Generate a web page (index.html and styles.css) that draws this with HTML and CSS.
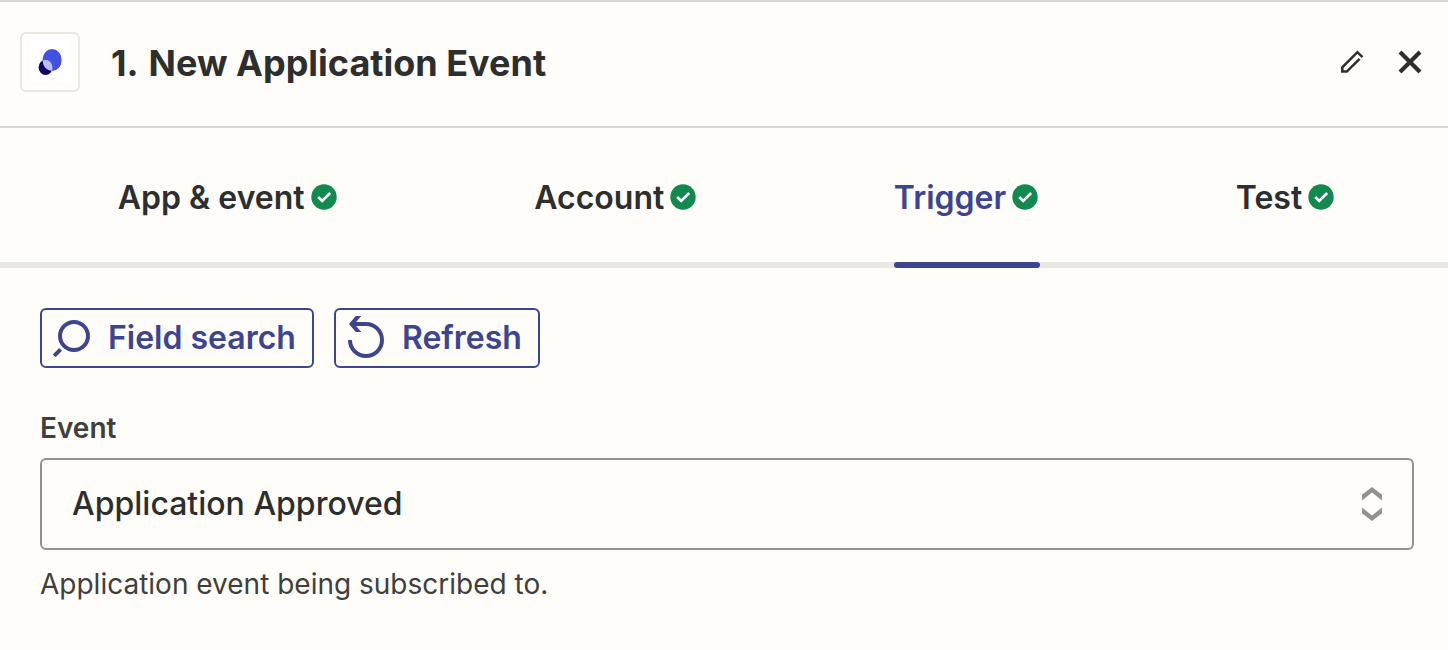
FILE: index.html
```html
<!DOCTYPE html>
<html lang="en">

<head>
    <meta charset="UTF-8">
    <meta name="viewport" content="width=device-width, initial-scale=1.0">
    <title>New Application Event</title>
    <link rel="stylesheet" href="styles.css">
</head>

<body>
    <header class="step-header">
        <div class="app-logo">
            <svg width="40" height="40" viewBox="0 0 40 40" aria-hidden="true">
                <defs>
                    <clipPath id="blob">
                        <rect x="12.7" y="7" width="18.8" height="22" rx="9.4" ry="10" />
                    </clipPath>
                </defs>
                <rect width="40" height="40" fill="#fff" />
                <rect x="12.7" y="7" width="18.8" height="22" rx="9.4" ry="10" fill="#4250e4" />
                <ellipse cx="15.6" cy="25.4" rx="7" ry="7.6" fill="#100660" />
                <ellipse cx="15.6" cy="25.4" rx="7" ry="7.6" fill="#b9c0f8" clip-path="url(#blob)" />
            </svg>
        </div>
        <h1><span>1.</span> <span>New Application Event</span></h1>
        <button type="button" class="icon-button" aria-label="Rename step">
            <svg width="24" height="24" viewBox="0 0 24 24" fill="none" stroke="#2d2e2e" stroke-width="2.5" aria-hidden="true">
                <path d="M22.5 7.2L17.4 2.2L2.3 17.3V21.6H6.8L19.6 8.9" />
            </svg>
        </button>
        <button type="button" class="icon-button" aria-label="Close">
            <svg width="24" height="24" viewBox="0 0 24 24" fill="none" stroke="#2d2e2e" stroke-width="4.2" aria-hidden="true">
                <path d="M2 2L22 22M22 2L2 22" />
            </svg>
        </button>
    </header>

    <nav class="tabs">
        <button type="button" class="tab">App &amp; event
            <svg class="check" viewBox="0 0 26 26" aria-hidden="true">
                <circle cx="13" cy="13" r="12.7" fill="#12894e" />
                <path d="M7.2 13L11.2 17L19.2 9" fill="none" stroke="#fff" stroke-width="2.6" />
            </svg>
        </button>
        <button type="button" class="tab">Account
            <svg class="check" viewBox="0 0 26 26" aria-hidden="true">
                <circle cx="13" cy="13" r="12.7" fill="#12894e" />
                <path d="M7.2 13L11.2 17L19.2 9" fill="none" stroke="#fff" stroke-width="2.6" />
            </svg>
        </button>
        <button type="button" class="tab active" aria-current="step">Trigger
            <svg class="check" viewBox="0 0 26 26" aria-hidden="true">
                <circle cx="13" cy="13" r="12.7" fill="#12894e" />
                <path d="M7.2 13L11.2 17L19.2 9" fill="none" stroke="#fff" stroke-width="2.6" />
            </svg>
        </button>
        <button type="button" class="tab">Test
            <svg class="check" viewBox="0 0 26 26" aria-hidden="true">
                <circle cx="13" cy="13" r="12.7" fill="#12894e" />
                <path d="M7.2 13L11.2 17L19.2 9" fill="none" stroke="#fff" stroke-width="2.6" />
            </svg>
        </button>
    </nav>

    <main class="content">
        <div class="actions">
            <button type="button" class="action">
                <svg width="40" height="48" viewBox="0 0 40 48" fill="none" stroke="#3d4592" stroke-width="4" aria-hidden="true">
                    <circle cx="22" cy="22" r="14" />
                    <path d="M8.6 35.4L2.2 41.8" />
                </svg>
                Field search
            </button>
            <button type="button" class="action">
                <svg width="40" height="48" viewBox="0 0 40 48" aria-hidden="true">
                    <path d="M4 26A16 16 0 1 0 20 10H6" fill="none" stroke="#3d4592" stroke-width="4" />
                    <path d="M3 10L9.8 2H15.2L8.4 10L15.2 18H9.8Z" fill="#3d4592" />
                </svg>
                Refresh
            </button>
        </div>

        <label class="field-label" for="event">Event</label>
        <div class="select-wrap">
            <select id="event" aria-describedby="event-help">
                <option>Application Approved</option>
            </select>
            <svg class="select-arrows" width="20" height="34" viewBox="0 0 20 34" fill="#95928e" aria-hidden="true">
                <path d="M10 0L20 7.8V13.5L10 5.4L0 13.5V7.8Z" />
                <path d="M10 34L20 26.2V20.5L10 28.6L0 20.5V26.2Z" />
            </svg>
        </div>
        <p class="help" id="event-help">Application event being subscribed to.</p>
    </main>
</body>

</html>
```
FILE: styles.css
```css
* {
    box-sizing: border-box;
}

body {
    margin: 0;
    background: #fffdf9;
    color: #2d2e2e;
    font-family: Inter, "Liberation Sans", sans-serif;
}

button {
    margin: 0;
    background: none;
    border: none;
    color: inherit;
    font-family: inherit;
    cursor: pointer;
}

svg {
    display: block;
    flex: none;
}

.step-header {
    display: flex;
    align-items: center;
    padding: 30px 20px 34px;
    border-top: 2px solid #d7d5d2;
    border-bottom: 2px solid #d7d5d2;
}

.app-logo {
    padding: 8px;
    border: 2px solid #e8e7e4;
    border-radius: 6px;
}

h1 {
    display: flex;
    flex: 1;
    gap: 10px;
    margin: 0;
    padding: 2px 0 0 31px;
    font-size: 36px;
    line-height: 44px;
    font-weight: 700;
}

.icon-button {
    padding: 6px;
}

.icon-button + .icon-button {
    margin-left: 22px;
}

.tabs {
    display: flex;
    justify-content: space-around;
    padding: 0 14px 0 20px;
    box-shadow: inset 0 -6px #e8e7e4;
}

.tab {
    display: flex;
    align-items: center;
    gap: 6px;
    position: relative;
    padding: 50px 2px 50px 0;
    font-size: 32px;
    line-height: 40px;
    font-weight: 600;
}

.tab.active {
    color: #3d4592;
}

.tab.active::after {
    content: "";
    position: absolute;
    left: 0;
    right: 0;
    bottom: 0;
    height: 6px;
    border-radius: 3px;
    background: #3d4592;
}

.check {
    width: 26px;
    height: 26px;
    margin-bottom: 2px;
}

.content {
    padding: 40px 34px 40px 40px;
}

.actions {
    display: flex;
    gap: 20px;
    margin-bottom: 40px;
}

.action {
    display: flex;
    align-items: center;
    gap: 16px;
    padding: 4px 16px 4px 10px;
    border: 2px solid #3d4592;
    border-radius: 6px;
    color: #3d4592;
    font-size: 32px;
    line-height: 40px;
    font-weight: 600;
}

.field-label {
    display: block;
    margin-bottom: 10px;
    color: #403f3e;
    font-size: 28px;
    line-height: 40px;
    font-weight: 600;
}

.select-wrap {
    position: relative;
}

select {
    display: block;
    width: 100%;
    height: 92px;
    padding: 0 70px 2px 30px;
    appearance: none;
    background: #fffdf9;
    border: 2px solid #95928e;
    border-radius: 6px;
    color: #2d2e2e;
    font-family: inherit;
    font-size: 32px;
    font-weight: 500;
}

.select-arrows {
    position: absolute;
    top: 29px;
    right: 32px;
    pointer-events: none;
}

.help {
    margin: 14px 0 0;
    color: #403f3e;
    font-size: 28px;
    line-height: 40px;
}
```
